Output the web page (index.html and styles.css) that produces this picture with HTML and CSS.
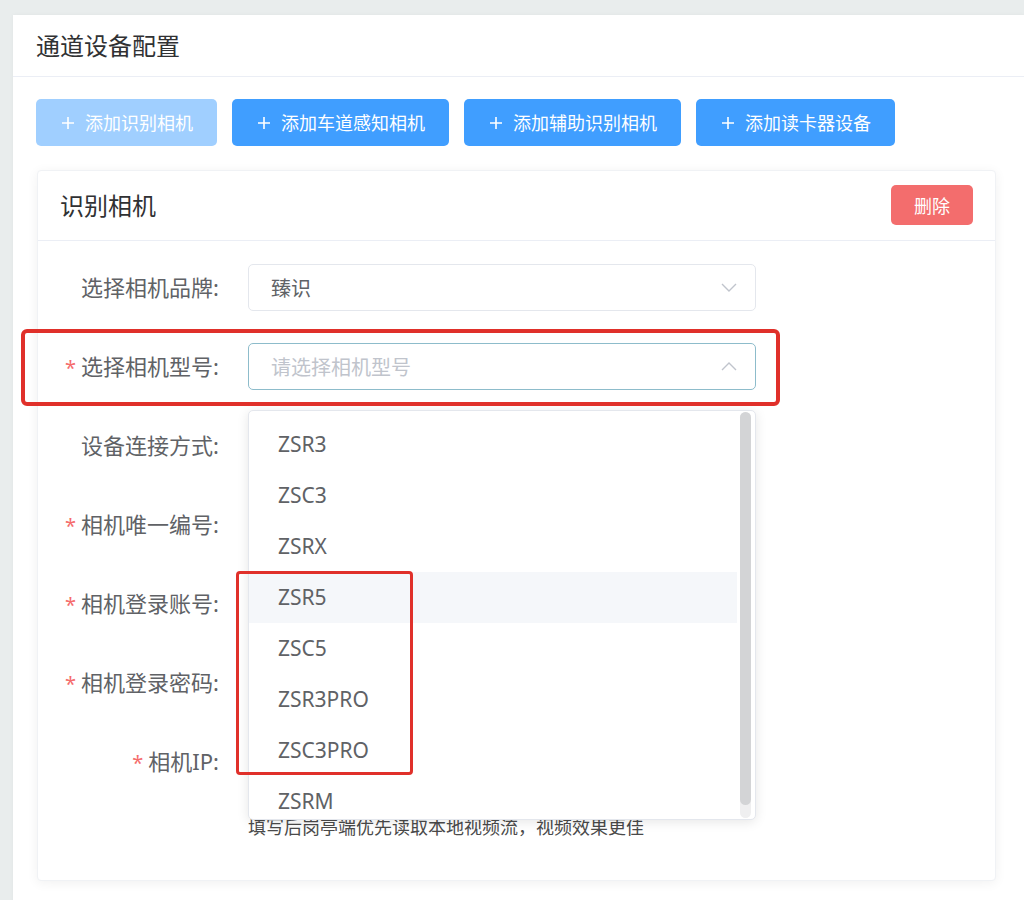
FILE: index.html
```html
<!DOCTYPE html>
<html lang="zh-CN">
<head>
<meta charset="utf-8">
<title>通道设备配置</title>
<link rel="stylesheet" href="styles.css">
</head>
<body>
<div class="page">
  <div class="outer">
    <div class="outer-head">通道设备配置</div>
    <div class="outer-body">
      <div class="btn-row">
        <button class="btn btn-disabled"><svg class="plus" viewBox="0 0 14 14"><path d="M7 1v12M1 7h12"/></svg>添加识别相机</button>
        <button class="btn"><svg class="plus" viewBox="0 0 14 14"><path d="M7 1v12M1 7h12"/></svg>添加车道感知相机</button>
        <button class="btn"><svg class="plus" viewBox="0 0 14 14"><path d="M7 1v12M1 7h12"/></svg>添加辅助识别相机</button>
        <button class="btn"><svg class="plus" viewBox="0 0 14 14"><path d="M7 1v12M1 7h12"/></svg>添加读卡器设备</button>
      </div>
      <div class="card">
        <div class="card-head">
          <span class="card-title">识别相机</span>
          <button class="btn-del">删除</button>
        </div>
        <div class="form">
          <div class="row">
            <label class="lbl">选择相机品牌:</label>
            <div class="ctrl">
              <div class="select"><span class="val">臻识</span><svg class="chev" viewBox="0 0 16 9"><path d="M1 1l7 7 7-7"/></svg></div>
            </div>
          </div>
          <div class="row">
            <label class="lbl req">选择相机型号:</label>
            <div class="ctrl">
              <div class="select focus"><span class="ph">请选择相机型号</span><svg class="chev" viewBox="0 0 16 9"><path d="M1 8l7-7 7 7"/></svg></div>
              <div class="dropdown">
                <ul class="opts">
                  <li>ZSR3</li>
                  <li>ZSC3</li>
                  <li>ZSRX</li>
                  <li class="hover">ZSR5</li>
                  <li>ZSC5</li>
                  <li>ZSR3PRO</li>
                  <li>ZSC3PRO</li>
                  <li>ZSRM</li>
                </ul>
                <div class="track"><div class="thumb"></div></div>
              </div>
            </div>
          </div>
          <div class="row">
            <label class="lbl">设备连接方式:</label>
            <div class="ctrl"><div class="input"></div></div>
          </div>
          <div class="row">
            <label class="lbl req">相机唯一编号:</label>
            <div class="ctrl"><div class="input"></div></div>
          </div>
          <div class="row">
            <label class="lbl req">相机登录账号:</label>
            <div class="ctrl"><div class="input"></div></div>
          </div>
          <div class="row">
            <label class="lbl req">相机登录密码:</label>
            <div class="ctrl"><div class="input"></div></div>
          </div>
          <div class="row last">
            <label class="lbl req">相机IP:</label>
            <div class="ctrl">
              <div class="input"></div>
              <div class="hint">填写后岗亭端优先读取本地视频流，视频效果更佳</div>
            </div>
          </div>
        </div>
      </div>
    </div>
  </div>
  <div class="mark mark1"></div>
  <div class="mark mark2"></div>
</div>
</body>
</html>
```

FILE: styles.css
```css
* { box-sizing: border-box; }
html, body { margin: 0; padding: 0; }
body {
  background: #e9eded;
  font-family: "Noto Sans", "Noto Sans CJK SC", sans-serif;
  color: #606266;
  overflow: hidden;
}
.page {
  position: relative;
  padding: 15px 0 0 13px;
  min-height: 900px;
}
.outer {
  background: #fff;
  min-height: 900px;
  box-shadow: 0 0 4px rgba(0,0,0,0.04);
}
.outer-head {
  height: 62px;
  border-bottom: 1px solid #ebeef5;
  padding-left: 23px;
  font-size: 24px;
  line-height: 61px;
  color: #303133;
}
.outer-body {
  padding: 22px 28px 0 23px;
}
.btn-row {
  display: flex;
  gap: 15px;
}
.btn {
  display: flex;
  align-items: center;
  height: 47px;
  padding: 0 24px 0 25px;
  border: none;
  border-radius: 5px;
  background: #409eff;
  color: #fff;
  font-family: inherit;
  font-size: 18px;
  line-height: 1;
}
.btn-disabled { background: #a0cfff; }
.plus {
  width: 14px;
  height: 14px;
  margin-right: 10px;
  fill: none;
  stroke: #fff;
  stroke-width: 1.6;
}
.card {
  margin-top: 24px;
  margin-left: 1px;
  background: #fff;
  border: 1px solid #f0f2f5;
  border-radius: 4px;
  box-shadow: 0 2px 12px rgba(0,0,0,0.06);
}
.card-head {
  height: 70px;
  border-bottom: 1px solid #ebeef5;
  display: flex;
  align-items: center;
  justify-content: space-between;
  padding: 0 22px 0 22px;
}
.card-title {
  font-size: 24px;
  color: #303133;
  line-height: 1;
}
.btn-del {
  width: 82px;
  height: 40px;
  margin-top: -2px;
  border: none;
  border-radius: 5px;
  background: #f36d6d;
  color: #fff;
  font-family: inherit;
  font-size: 18px;
  padding: 0;
}
.form {
  padding: 23px 0 41px 0;
}
.row {
  display: flex;
  align-items: flex-start;
  margin-bottom: 32px;
}
.row.last { margin-bottom: 0; }
.lbl {
  width: 181px;
  height: 47px;
  overflow: visible;
  flex: none;
  text-align: right;
  font-size: 22px;
  line-height: 47px;
  color: #606266;
  margin-right: 29px;
  white-space: nowrap;
}
.lbl.req::before {
  content: "*";
  color: #f56c6c;
  margin-right: 5px;
  font-size: 20px;
}
.ctrl {
  position: relative;
  width: 508px;
  flex: none;
}
.select, .input {
  height: 47px;
  border: 1px solid #e4e7ed;
  border-radius: 5px;
  background: #fff;
}
.select {
  display: flex;
  align-items: center;
  justify-content: space-between;
  padding: 0 18px 0 22px;
  font-size: 20px;
}
.select.focus { border-color: #8dbccb; }
.val { color: #606266; }
.ph { color: #c0c4cc; }
.chev {
  width: 16px;
  height: 9px;
  fill: none;
  stroke: #c0c4cc;
  stroke-width: 1.4;
}
.hint {
  margin-top: 30px;
  font-size: 18px;
  line-height: 24px;
  color: #4a4a4a;
  white-space: nowrap;
}
.dropdown {
  position: absolute;
  z-index: 10;
  top: 67px;
  left: 0;
  width: 508px;
  height: 410px;
  background: #fff;
  border: 1px solid #e4e7ed;
  border-radius: 5px;
  box-shadow: 0 2px 12px rgba(0,0,0,0.1);
  overflow: hidden;
}
.opts {
  list-style: none;
  margin: 8px 18px 0 0;
  padding: 0;
}
.opts li {
  height: 51px;
  line-height: 51px;
  padding-left: 29px;
  font-size: 21px;
  color: #606266;
}
.opts li.hover { background: #f5f7fa; }
.track {
  position: absolute;
  right: 4px;
  top: 1px;
  bottom: 1px;
  width: 11px;
  border-radius: 6px;
  background: #efeff0;
}
.thumb {
  height: 393px;
  border-radius: 6px;
  background: #d3d4d6;
}
.mark {
  position: absolute;
  border-style: solid;
  border-color: #e0302a;
  pointer-events: none;
  z-index: 20;
}
.mark1 {
  left: 21px;
  top: 329px;
  width: 759px;
  height: 77px;
  border-width: 4px;
  border-radius: 6px;
}
.mark2 {
  left: 236px;
  top: 571px;
  width: 177px;
  height: 204px;
  border-width: 3px;
  border-radius: 4px;
}
```
